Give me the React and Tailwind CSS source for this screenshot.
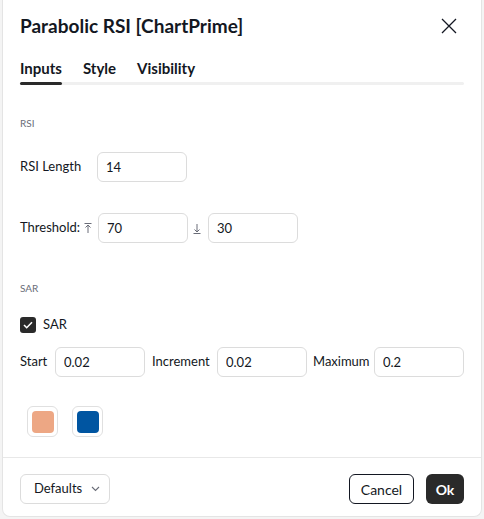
import React, { useState } from 'react';

const font = { fontFamily: 'Lato, "Noto Sans", sans-serif' };

const Field = ({ value, className = '' }) => (
    <input
        defaultValue={value}
        className={`h-[30px] w-[90px] rounded-md border border-[#dcdcdc] bg-white px-2 text-[13px] text-[#131722] outline-none ${className}`}
    />
);

const SectionLabel = ({ children, className = '' }) => (
    <div className={`h-4 text-[10px] leading-4 text-[#6a6d78] ${className}`}>{children}</div>
);

const BarArrow = ({ down }) => (
    <svg width="8" height="11" viewBox="0 0 8 11" className="text-[#6a6d78]">
        {down ? (
            <g stroke="currentColor" strokeWidth="1" fill="none">
                <path d="M4 1v8M1.5 6.5L4 9l2.5-2.5M0.5 10.5h7" />
            </g>
        ) : (
            <g stroke="currentColor" strokeWidth="1" fill="none">
                <path d="M4 10V2M1.5 4.5L4 2l2.5 2.5M0.5 0.5h7" />
            </g>
        )}
    </svg>
);

const Swatch = ({ color }) => (
    <button className="flex h-[31px] w-[31px] items-center justify-center rounded-md border border-[#e0e0e0] bg-white">
        <span className="h-[22px] w-[22px] rounded-[4px]" style={{ backgroundColor: color }} />
    </button>
);

const App = () => {
    const [tab, setTab] = useState('Inputs');
    const [sar, setSar] = useState(true);
    const tabs = ['Inputs', 'Style', 'Visibility'];

    return (
        <div className="h-[519px] w-[484px] bg-[#f4f4f4]" style={font}>
            <div className="ml-[2px] flex h-[517px] w-[480px] flex-col rounded-b-lg border-x border-b border-[#e4e4e4] bg-white text-[#131722]">
                {/* header */}
                <div className="flex h-[52px] items-center justify-between pl-[17px] pr-[22px]">
                    <h2 className="text-[19px] font-bold">Parabolic RSI [ChartPrime]</h2>
                    <button className="flex h-5 w-5 items-center justify-center">
                        <svg width="16" height="16" viewBox="0 0 16 16">
                            <path d="M1 1l14 14M15 1L1 15" stroke="#131722" strokeWidth="1.3" />
                        </svg>
                    </button>
                </div>

                {/* tabs */}
                <div className="mx-[17px] mt-[2px]">
                    <div className="flex h-[28px] items-center gap-[21px] text-[15px] font-bold">
                        {tabs.map((t) => (
                            <button key={t} onClick={() => setTab(t)} className="leading-none">
                                {t}
                            </button>
                        ))}
                    </div>
                    <div className="h-[3px] rounded-full bg-[#f0f0f0]">
                        <div className="h-[3px] w-[42px] rounded-full bg-[#2a2a2a]" />
                    </div>
                </div>

                {/* inputs */}
                <div className="flex-1 px-[17px] text-[13px]">
                    <SectionLabel className="mt-[30px]">RSI</SectionLabel>

                    <div className="mt-[21px] flex items-center">
                        <span className="w-[77px]">RSI Length</span>
                        <Field value="14" />
                    </div>

                    <div className="mt-[31px] flex items-center">
                        <span className="w-[64px]">Threshold:</span>
                        <BarArrow />
                        <Field value="70" className="ml-[6px]" />
                        <span className="ml-[5px] mr-[7px] flex"><BarArrow down /></span>
                        <Field value="30" />
                    </div>

                    <SectionLabel className="mt-[37px]">SAR</SectionLabel>

                    <label className="mt-[21px] flex h-4 items-center gap-[7px]">
                        <button
                            onClick={() => setSar(!sar)}
                            className="flex h-4 w-4 items-center justify-center rounded-[3px] bg-[#2a2a2a]"
                        >
                            {sar && (
                                <svg width="10" height="8" viewBox="0 0 10 8">
                                    <path d="M1 4l2.7 2.7L9 1.3" stroke="#fff" strokeWidth="1.6" fill="none" />
                                </svg>
                            )}
                        </button>
                        <span>SAR</span>
                    </label>

                    <div className="mt-[14px] flex items-center">
                        <span className="w-[35px]">Start</span>
                        <Field value="0.02" />
                        <span className="ml-[7px] w-[65px]">Increment</span>
                        <Field value="0.02" />
                        <span className="ml-[6px] w-[61px]">Maximum</span>
                        <Field value="0.2" />
                    </div>

                    <div className="mt-[29px] flex gap-[14px] pl-[7px]">
                        <Swatch color="#eda784" />
                        <Swatch color="#0055a1" />
                    </div>
                </div>

                {/* footer */}
                <div className="flex items-center justify-between border-t border-[#e8e8e8] px-[17px] pt-[16px] pb-[12px]">
                    <button className="flex h-[30px] w-[90px] items-center justify-between rounded-md border border-[#dcdcdc] pl-[13px] pr-[9px] text-[13px]">
                        Defaults
                        <svg width="9" height="6" viewBox="0 0 9 6">
                            <path d="M1 1l3.5 3.5L8 1" stroke="#6a6d78" strokeWidth="1.1" fill="none" />
                        </svg>
                    </button>
                    <div className="flex gap-[12px]">
                        <button className="h-[30px] w-[65px] rounded-md border border-[#131722] text-[14px]">Cancel</button>
                        <button className="h-[30px] w-[38px] rounded-md bg-[#2a2a2a] text-[14px] font-bold text-white">Ok</button>
                    </div>
                </div>
            </div>
        </div>
    );
};

export default App;
